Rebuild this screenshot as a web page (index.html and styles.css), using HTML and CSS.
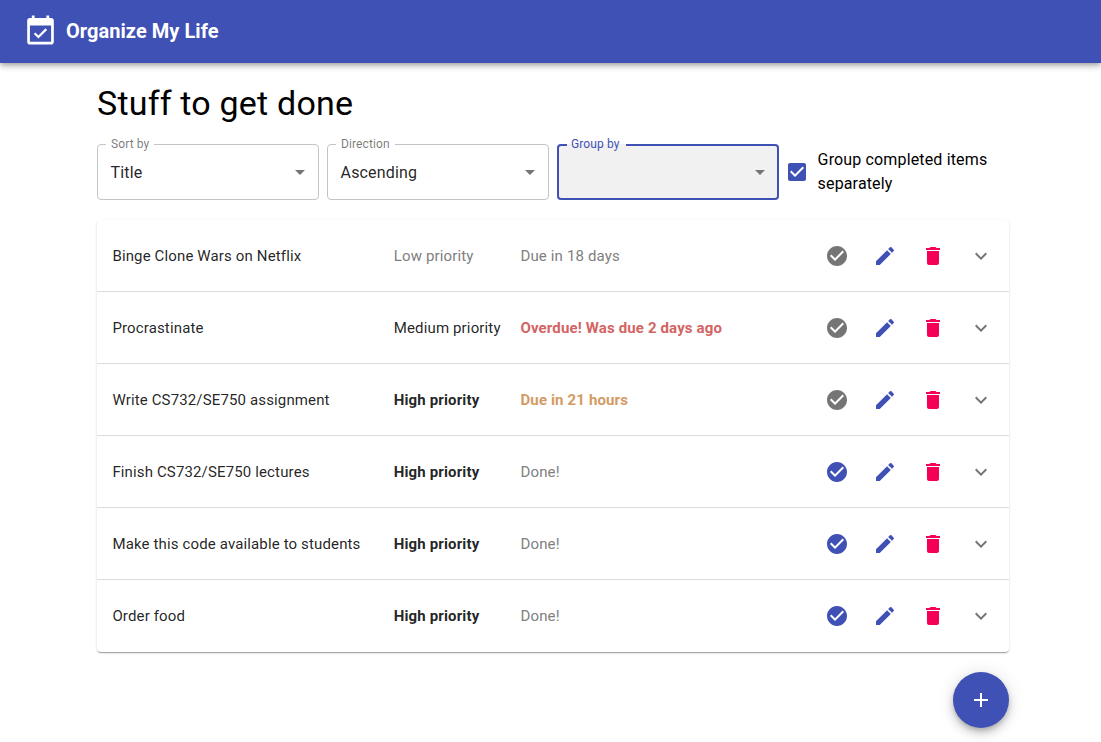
FILE: index.html
```html
<!DOCTYPE html>
<html lang="en">
<head>
<meta charset="utf-8">
<title>Organize My Life</title>
<link rel="stylesheet" href="styles.css">
</head>
<body>
<svg class="sprite" aria-hidden="true">
  <symbol id="done" viewBox="0 0 24 24"><path d="M12 2C6.48 2 2 6.48 2 12s4.48 10 10 10 10-4.48 10-10S17.52 2 12 2zm-2 15l-5-5 1.41-1.41L10 14.17l7.59-7.59L19 8l-9 9z"/></symbol>
  <symbol id="edit" viewBox="0 0 24 24"><path d="M3 17.25V21h3.75L17.81 9.94l-3.75-3.75L3 17.25zM20.71 7.04c.39-.39.39-1.02 0-1.41l-2.34-2.34c-.39-.39-1.02-.39-1.41 0l-1.83 1.83 3.75 3.75 1.83-1.83z"/></symbol>
  <symbol id="delete" viewBox="0 0 24 24"><path d="M6 19c0 1.1.9 2 2 2h8c1.1 0 2-.9 2-2V7H6v12zM19 4h-3.5l-1-1h-5l-1 1H5v2h14V4z"/></symbol>
  <symbol id="more" viewBox="0 0 24 24"><path d="M16.59 8.59L12 13.17 7.41 8.59 6 10l6 6 6-6z"/></symbol>
  <symbol id="drop" viewBox="0 0 24 24"><path d="M7 10l5 5 5-5z"/></symbol>
</svg>
<header class="appbar">
  <svg class="logo" viewBox="0 0 33 33"><path fill-rule="evenodd" d="M7.8 .4h2.8v2.6h11.8v-2.6h2.8v2.6h1.8a2.8 2.8 0 0 1 2.8 2.8v21a2.8 2.8 0 0 1-2.8 2.8H6a2.8 2.8 0 0 1-2.8-2.8v-21A2.8 2.8 0 0 1 6 3h1.8zM5.9 10.4v16.4h21.2V10.4z"/><path class="logo-check" d="M10.6 18.2l3.8 3.8 7.9-7.9"/></svg>
  <span class="brand">Organize My Life</span>
</header>
<main class="page">
  <h1 class="title">Stuff to get done</h1>
  <div class="filters">
    <fieldset class="select"><legend class="label">Sort by</legend><div class="value"><span>Title</span><svg class="icon"><use href="#drop"/></svg></div></fieldset>
    <fieldset class="select"><legend class="label">Direction</legend><div class="value"><span>Ascending</span><svg class="icon"><use href="#drop"/></svg></div></fieldset>
    <fieldset class="select focused"><legend class="label">Group by</legend><div class="value"><span></span><svg class="icon"><use href="#drop"/></svg></div></fieldset>
    <div class="check"><svg class="icon" viewBox="0 0 24 24"><path d="M19 3H5c-1.11 0-2 .9-2 2v14c0 1.1.89 2 2 2h14c1.11 0 2-.9 2-2V5c0-1.1-.89-2-2-2zm-9 14l-5-5 1.41-1.41L10 14.17l7.59-7.59L19 8l-9 9z"/></svg><span class="check-text">Group completed items separately</span></div>
  </div>
  <section class="list">
    <div class="row"><span class="name">Binge Clone Wars on Netflix</span><span class="priority muted">Low priority</span><span class="due muted">Due in 18 days</span><div class="actions"><svg class="icon grey"><use href="#done"/></svg><svg class="icon blue"><use href="#edit"/></svg><svg class="icon red"><use href="#delete"/></svg><svg class="icon grey"><use href="#more"/></svg></div></div>
    <div class="row"><span class="name">Procrastinate</span><span class="priority">Medium priority</span><span class="due overdue">Overdue! Was due 2 days ago</span><div class="actions"><svg class="icon grey"><use href="#done"/></svg><svg class="icon blue"><use href="#edit"/></svg><svg class="icon red"><use href="#delete"/></svg><svg class="icon grey"><use href="#more"/></svg></div></div>
    <div class="row"><span class="name">Write CS732/SE750 assignment</span><span class="priority high">High priority</span><span class="due soon">Due in 21 hours</span><div class="actions"><svg class="icon grey"><use href="#done"/></svg><svg class="icon blue"><use href="#edit"/></svg><svg class="icon red"><use href="#delete"/></svg><svg class="icon grey"><use href="#more"/></svg></div></div>
    <div class="row"><span class="name">Finish CS732/SE750 lectures</span><span class="priority high">High priority</span><span class="due muted">Done!</span><div class="actions"><svg class="icon blue"><use href="#done"/></svg><svg class="icon blue"><use href="#edit"/></svg><svg class="icon red"><use href="#delete"/></svg><svg class="icon grey"><use href="#more"/></svg></div></div>
    <div class="row"><span class="name">Make this code available to students</span><span class="priority high">High priority</span><span class="due muted">Done!</span><div class="actions"><svg class="icon blue"><use href="#done"/></svg><svg class="icon blue"><use href="#edit"/></svg><svg class="icon red"><use href="#delete"/></svg><svg class="icon grey"><use href="#more"/></svg></div></div>
    <div class="row"><span class="name">Order food</span><span class="priority high">High priority</span><span class="due muted">Done!</span><div class="actions"><svg class="icon blue"><use href="#done"/></svg><svg class="icon blue"><use href="#edit"/></svg><svg class="icon red"><use href="#delete"/></svg><svg class="icon grey"><use href="#more"/></svg></div></div>
  </section>
  <button class="fab" aria-label="Add"><svg class="icon" viewBox="0 0 24 24"><path d="M19 13h-6v6h-2v-6H5v-2h6V5h2v6h6v2z"/></svg></button>
</main>
</body>
</html>
```
FILE: styles.css
```css
* { box-sizing: border-box; }
body { margin: 0; min-height: 100vh; background: #fff; color: rgba(0,0,0,.87); font-family: Roboto, sans-serif; }
.sprite { display: none; }
.icon { display: block; width: 24px; height: 24px; flex: none; fill: currentColor; }
.appbar { display: flex; align-items: center; height: 63px; padding: 0 24px; background: #3f51b5; color: #fff; box-shadow: 0 2px 4px -1px rgba(0,0,0,.2), 0 4px 5px rgba(0,0,0,.14), 0 1px 10px rgba(0,0,0,.12); }
.logo { width: 33px; height: 33px; fill: currentColor; margin-right: 9px; }
.logo-check { fill: none; stroke: currentColor; stroke-width: 2.2; }
.brand { padding-bottom: 2px; font-size: 20px; font-weight: 700; line-height: 32px; letter-spacing: .05px; }
.page { display: flex; flex-direction: column; width: 912px; margin: 19px 0 0 97px; }
.title { margin: 0 0 15px; font-size: 34px; font-weight: 400; line-height: 42px; letter-spacing: .2px; color: #000; }
.filters { display: flex; gap: 8px; height: 61px; }
.select { flex: none; width: 222px; height: 61px; min-width: 0; margin: 0; padding: 0 6px 0 8px; border: 1px solid #c4c4c4; border-radius: 4px; }
.label { padding: 0 5px; font-size: 12px; line-height: 11px; letter-spacing: .11px; color: rgba(0,0,0,.54); }
.value { display: flex; align-items: center; justify-content: space-between; height: 44px; padding-left: 4.6px; font-size: 16px; letter-spacing: .15px; }
.value .icon { color: #757575; }
.focused { padding: 0 5px 0 8px; border: 2px solid #3f51b5; background: #f1f1f1; }
.focused .label { padding: 0 6px 0 4px; color: #3f51b5; }
.check { display: flex; align-items: center; gap: 8.6px; margin: 5px 0 0 -2px; color: #3f51b5; }
.check-text { width: 190px; color: #000; font-size: 16px; line-height: 24px; letter-spacing: .15px; }
.list { margin-top: 20px; border-radius: 4px; box-shadow: 0 2px 1px -1px rgba(0,0,0,.2), 0 1px 1px rgba(0,0,0,.14), 0 1px 3px rgba(0,0,0,.12); }
.row { display: grid; grid-template-columns: 281.4px 126.7px 1fr auto; align-items: center; height: 72px; padding: 0 16px 0 15.4px; font-size: 15px; letter-spacing: .14px; border-bottom: 1px solid #dcdcdc; }
.row:last-child { border-bottom: 0; }
.actions { display: flex; gap: 24px; }
.muted { color: #808080; }
.high, .overdue, .soon { font-weight: 700; }
.overdue { color: #d36464; }
.soon { color: #d49a64; }
.grey { color: #757575; }
.blue { color: #3f51b5; }
.red { color: #f50057; }
.fab { display: flex; align-items: center; justify-content: center; align-self: flex-end; width: 56px; height: 56px; margin-top: 20px; padding: 0; border: 0; border-radius: 50%; background: #3f51b5; color: #fff; box-shadow: 0 3px 5px -1px rgba(0,0,0,.2), 0 6px 10px rgba(0,0,0,.14), 0 1px 18px rgba(0,0,0,.12); }
```
